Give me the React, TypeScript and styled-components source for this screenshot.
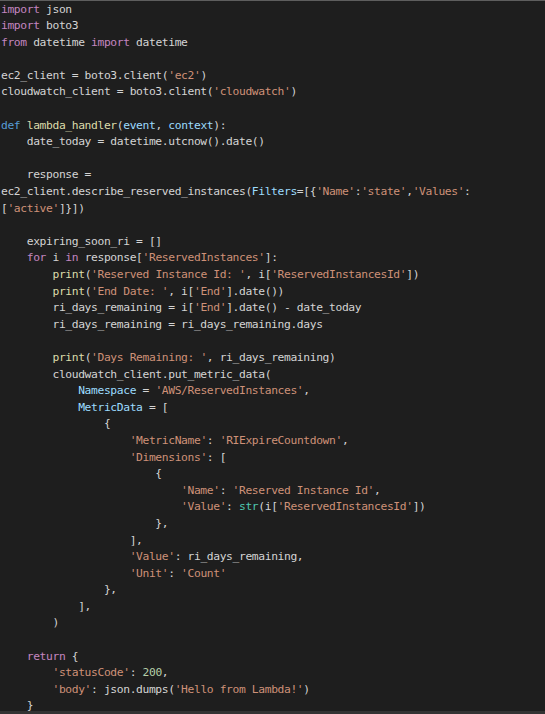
import React from "react";
import styled, { createGlobalStyle } from "styled-components";

const GlobalStyle = createGlobalStyle`
  html, body {
    margin: 0;
    padding: 0;
    background: #1e1e1e;
  }
`;

const Editor = styled.div`
  height: 714px;
  overflow: hidden;
  background: #1e1e1e;
  box-shadow: inset 0 1px 0 #5e5e5e, inset 0 -3px 0 #333;
  padding: 1.5px 0 0 1px;
  box-sizing: border-box;
`;

const Code = styled.pre`
  margin: 0;
  font-family: "DejaVu Sans Mono", "Liberation Mono", monospace;
  font-size: 11.3px;
  letter-spacing: -0.37px;
  color: #d4d4d4;
`;

const Line = styled.div`
  height: 16.6px;
  line-height: 16.6px;
  white-space: pre;
`;

type Kind = "k" | "d" | "s" | "p" | "f" | "t" | "n" | "x";

const colors: Record<Kind, string> = {
  k: "#c586c0",
  d: "#569cd6",
  s: "#ce9178",
  p: "#9cdcfe",
  f: "#dcdcaa",
  t: "#4ec9b0",
  n: "#b5cea8",
  x: "#d4d4d4",
};

const Tok = styled.span<{ $kind: Kind }>`
  color: ${(p) => colors[p.$kind]};
`;

type T = [Kind, string] | string;
const k = (s: string): T => ["k", s];
const d = (s: string): T => ["d", s];
const s = (v: string): T => ["s", v];
const p = (v: string): T => ["p", v];
const f = (v: string): T => ["f", v];
const t = (v: string): T => ["t", v];
const n = (v: string): T => ["n", v];

const lines: T[][] = [
  [k("import"), " json"],
  [k("import"), " boto3"],
  [k("from"), " datetime ", k("import"), " datetime"],
  [],
  ["ec2_client = boto3.client(", s("'ec2'"), ")"],
  ["cloudwatch_client = boto3.client(", s("'cloudwatch'"), ")"],
  [],
  [d("def"), " ", f("lambda_handler"), "(", p("event"), ", ", p("context"), "):"],
  ["    date_today = datetime.utcnow().date()"],
  [],
  ["    response ="],
  ["ec2_client.describe_reserved_instances(", p("Filters"), "=[{", s("'Name'"), ":", s("'state'"), ",", s("'Values'"), ":"],
  ["[", s("'active'"), "]}])"],
  [],
  ["    expiring_soon_ri = []"],
  ["    ", k("for"), " i ", k("in"), " response[", s("'ReservedInstances'"), "]:"],
  ["        ", f("print"), "(", s("'Reserved Instance Id: '"), ", i[", s("'ReservedInstancesId'"), "])"],
  ["        ", f("print"), "(", s("'End Date: '"), ", i[", s("'End'"), "].date())"],
  ["        ri_days_remaining = i[", s("'End'"), "].date() - date_today"],
  ["        ri_days_remaining = ri_days_remaining.days"],
  [],
  ["        ", f("print"), "(", s("'Days Remaining: '"), ", ri_days_remaining)"],
  ["        cloudwatch_client.put_metric_data("],
  ["            ", p("Namespace"), " = ", s("'AWS/ReservedInstances'"), ","],
  ["            ", p("MetricData"), " = ["],
  ["                {"],
  ["                    ", s("'MetricName'"), ": ", s("'RIExpireCountdown'"), ","],
  ["                    ", s("'Dimensions'"), ": ["],
  ["                        {"],
  ["                            ", s("'Name'"), ": ", s("'Reserved Instance Id'"), ","],
  ["                            ", s("'Value'"), ": ", t("str"), "(i[", s("'ReservedInstancesId'"), "])"],
  ["                        },"],
  ["                    ],"],
  ["                    ", s("'Value'"), ": ri_days_remaining,"],
  ["                    ", s("'Unit'"), ": ", s("'Count'")],
  ["                },"],
  ["            ],"],
  ["        )"],
  [],
  ["    ", k("return"), " {"],
  ["        ", s("'statusCode'"), ": ", n("200"), ","],
  ["        ", s("'body'"), ": json.dumps(", s("'Hello from Lambda!'"), ")"],
  ["    }"],
];

export default function App() {
  return (
    <>
      <GlobalStyle />
      <Editor>
        <Code>
          {lines.map((line, i) => (
            <Line key={i}>
              {line.length === 0
                ? " "
                : line.map((tok, j) =>
                    typeof tok === "string" ? (
                      <Tok key={j} $kind="x">{tok}</Tok>
                    ) : (
                      <Tok key={j} $kind={tok[0]}>{tok[1]}</Tok>
                    )
                  )}
            </Line>
          ))}
        </Code>
      </Editor>
    </>
  );
}
